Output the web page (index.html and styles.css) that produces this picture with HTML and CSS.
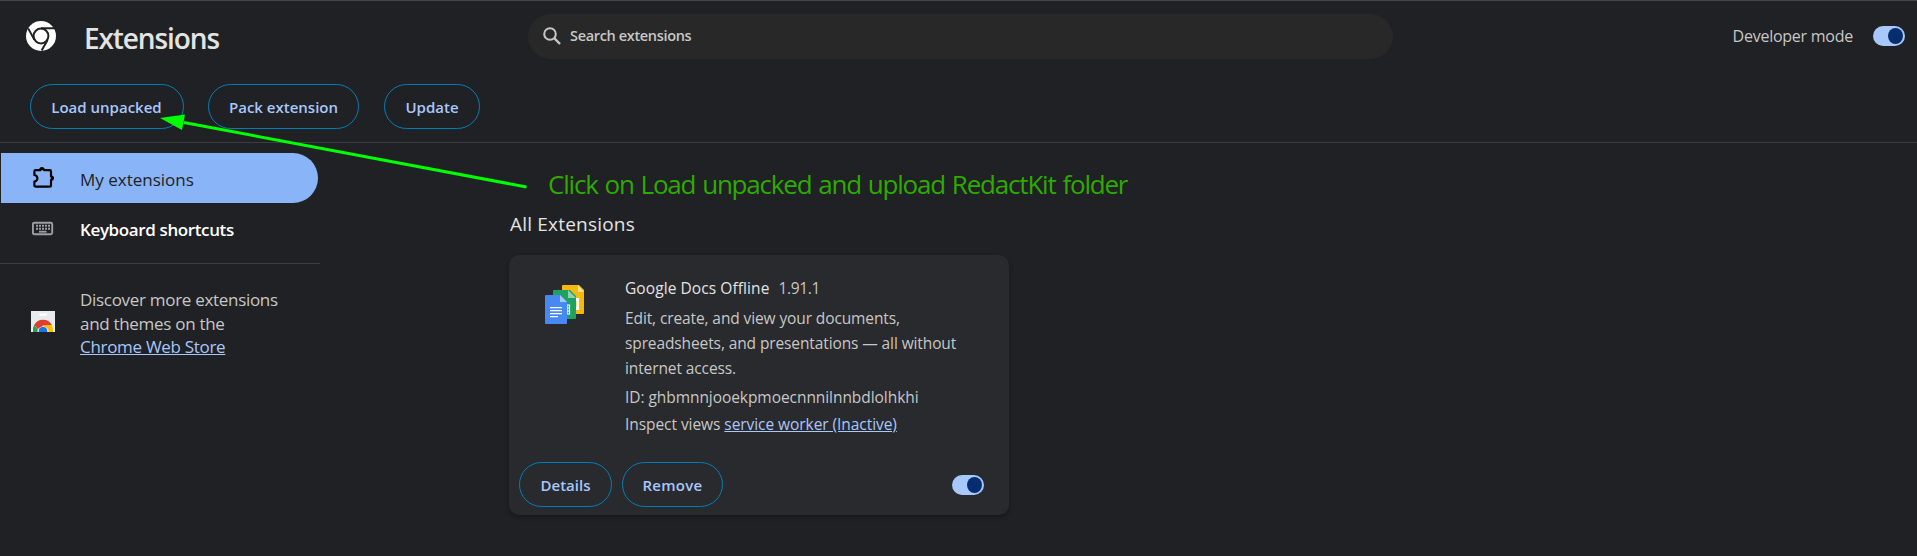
FILE: index.html
```
<!DOCTYPE html>
<html lang="en">
<head>
<meta charset="utf-8">
<title>Extensions</title>
<link rel="stylesheet" href="styles.css">
</head>
<body>
<header class="header">
  <div class="toolbar">
    <svg class="logo" viewBox="0 0 30 30">
      <circle cx="15" cy="15" r="15" fill="#fff"/>
      <circle cx="15" cy="15" r="7.4" fill="none" stroke="#202124" stroke-width="2"/>
      <path d="M15 7.3H28.5M8.4 18.9 2.2 7.4M21.6 18.9 15.6 29.5" fill="none" stroke="#202124" stroke-width="2"/>
    </svg>
    <h1 class="title">Extensions</h1>
    <div class="search">
      <svg class="search-icon" viewBox="0 0 18 18"><circle cx="7" cy="7" r="5.8" fill="none" stroke="#c7c7c7" stroke-width="2"/><path d="M11.2 11.2 17 17" stroke="#c7c7c7" stroke-width="2.4"/></svg>
      <span class="placeholder">Search extensions</span>
    </div>
    <div class="devmode"><span>Developer mode</span><i class="toggle"></i></div>
  </div>
  <div class="actions">
    <button class="btn btn-load">Load unpacked</button>
    <button class="btn btn-pack">Pack extension</button>
    <button class="btn btn-update">Update</button>
  </div>
</header>
<div class="page">
  <nav class="sidebar">
    <a class="nav-item active">
      <svg class="nav-icon" viewBox="0 0 22 22"><path d="M3 3.200H7.600A2.200 2.200 0 0 1 11.600 3.200H17.200Q18.400 3.200 18.400 4.400V9.200A2.200 2.200 0 0 1 18.400 13V18.400Q18.400 19.600 17.200 19.600H3Q1.800 19.600 1.800 18.400V14.600Q4.800 13.900 4.800 11.300T1.800 8V4.400Q1.800 3.200 3 3.200Z" transform="translate(.6 0)" fill="none" stroke="#000" stroke-width="2.200" stroke-linejoin="round"/><path d="M7.200 2.700A2.700 2.700 0 0 1 12.600 2.700ZM19.400 8.400A2.700 2.700 0 0 1 19.400 13.800Z"/></svg>
      <span class="nav-label">My extensions</span>
    </a>
    <a class="nav-item shortcuts">
      <svg class="nav-icon" viewBox="0 0 22 22"><rect x=".9" y="5.700" width="19.300" height="11.600" rx="1.500" fill="none" stroke="#9aa0a6" stroke-width="1.900"/><path d="M4 8.800H18M4 11.800H18" stroke="#9aa0a6" stroke-width="2" stroke-dasharray="2 1"/><path d="M7 14.700H14.500" stroke="#9aa0a6" stroke-width="1.800"/></svg>
      <span class="nav-label">Keyboard shortcuts</span>
    </a>
    <div class="promo">
      <svg class="store-icon" viewBox="0 0 24 21"><path fill="#e8eaed" d="M0 0H24V21H0z"/><rect x="8" y="2.500" width="8" height="2.200" rx="1.100" fill="#fff"/><path d="M3.200 13.800A10 10 0 0 1 20.800 14L12 14.600 7.500 19Z" fill="#e33b2e"/><path d="M3.200 13.800Q1.800 16 2 21H9L7 19Z" fill="#2a9e4c"/><path d="M12 14H20.800Q22.200 16.500 22 21H15Z" fill="#fbbc04"/><path d="M6.400 21A5.600 5.600 0 0 1 17.600 21Z" fill="#fff"/><path d="M7.700 21A4.400 4.400 0 1 1 16.300 21Z" fill="#1a73e8"/></svg>
      <p class="promo-text">Discover more extensions<br>and themes on the<br><a class="link">Chrome Web Store</a></p>
    </div>
  </nav>
  <main class="content">
    <p class="note">Click on Load unpacked and upload RedactKit folder</p>
    <h2 class="section">All Extensions</h2>
    <article class="card">
      <div class="card-main">
        <svg class="docs-icon" viewBox="0 0 39 39">
          <path d="M18 0H34L39 5V28Q39 29 38 29H18Q17 29 17 28V1Q17 0 18 0Z" fill="#f5b912"/><path d="M33 0 39 7H33Z" fill="#fbe08d"/><path d="M27 13H34V25H27Z" fill="#fff"/><path d="M27 16H31.500V22H27Z" fill="#f5b912"/>
          <path d="M9 5H25L31 11V33Q31 34 30 34H9Q8 34 8 33V6Q8 5 9 5Z" fill="#1fa162"/><path d="M23 5 31 13H23Z" fill="#8ed0b0"/><path d="M17 20H24.500V29H17M17 23H24.500M17 26H24.500M22 20V29" fill="none" stroke="#fff" stroke-width="1.200"/>
          <path d="M1 10H15L22 17V38Q22 39 21 39H1Q0 39 0 38V11Q0 10 1 10Z" fill="#4688f4"/><path d="M15 10 22 17H15Z" fill="#a8c7fa"/><path d="M5 22.700H17M5 25.700H17M5 28.700H17M5 31.700H13" stroke="#fff" stroke-width="1.300"/>
        </svg>
        <div class="info">
          <div class="name-row"><span class="name">Google Docs Offline</span><span class="version">1.91.1</span></div>
          <p class="desc">Edit, create, and view your documents,<br>spreadsheets, and presentations — all without<br>internet access.</p>
          <p class="meta">ID: ghbmnnjooekpmoecnnnilnnbdlolhkhi</p>
          <p class="meta views">Inspect views <a class="link">service worker (Inactive)</a></p>
        </div>
      </div>
      <div class="card-actions">
        <button class="btn btn-details">Details</button>
        <button class="btn btn-remove">Remove</button>
        <i class="toggle"></i>
      </div>
    </article>
  </main>
</div>
<svg class="arrow" viewBox="0 0 380 90"><path d="M34 9.500 376.500 74" stroke="#0f0" stroke-width="3"/><path d="M10 5 35 1.500 32 17Z" fill="#0f0"/></svg>
</body>
</html>
```
FILE: styles.css
```
* { box-sizing: border-box; }
body {
  margin: 0;
  height: 556px;
  overflow: hidden;
  background: #202124;
  color: #c7c7c7;
  font: 16px/24px "Open Sans", "Noto Sans", sans-serif;
  white-space: nowrap;
}
h1, h2, p { margin: 0; font-weight: 400; }
svg { display: block; flex: none; }
.header { height: 143px; border-top: 1px solid #474747; border-bottom: 1px solid #3c3d40; }
.toolbar { display: flex; align-items: center; height: 71px; padding: 0 12px 1px 26px; }
.logo { width: 30px; height: 30px; }
.title { width: 446px; margin-left: 26px; padding: 3px 0 0 2px; font-size: 28px; font-weight: 600; line-height: 36px; letter-spacing: -1.1px; color: #e3e3e3; }
.search { display: flex; align-items: center; gap: 9px; width: 865px; height: 45px; padding-left: 15px; border-radius: 23px; background: #282828; }
.placeholder { padding-bottom: 1px; font-size: 14.5px; font-weight: 600; letter-spacing: -.34px; }
.search-icon { width: 18px; height: 18px; }
.devmode { display: flex; align-items: center; gap: 20px; margin-left: auto; letter-spacing: -.25px; }
.toggle { display: flex; justify-content: flex-end; align-items: center; width: 32px; height: 20px; padding-right: 2px; border-radius: 10px; background: #a8c7fa; }
.toggle::after { content: ""; width: 15px; height: 16px; border-radius: 50%; background: #062e6f; }
.actions { display: flex; padding: 12px 30px 0; }
.btn { height: 45px; padding: 0 1px 0 0; border: 1px solid #047db7; border-radius: 23px; background: transparent; color: #a8c7fa; font: 600 15px/24px "Open Sans", sans-serif; white-space: nowrap; }
.btn-load { width: 154px; margin-right: 24px; }
.btn-pack { width: 151px; margin-right: 25px; padding: 0; }
.btn-update { width: 96px; padding: 0; }
.page { display: flex; }
.sidebar { width: 320px; padding-top: 10px; font-size: 17px; }
.nav-item { display: flex; align-items: center; gap: 26px; width: 317px; height: 50px; margin-left: 1px; padding-left: 31px; }
.nav-icon { width: 22px; height: 22px; }
.nav-label { padding-top: 4px; }
.active { border-radius: 0 25px 25px 0; background: #8ab4f8; color: #202124; }
.shortcuts { color: #fff; font-weight: 600; letter-spacing: -.38px; }
.promo { display: flex; align-items: flex-start; gap: 25px; margin-top: 10px; padding: 24px 0 0 31px; border-top: 1px solid #3c3d40; }
.promo-text { line-height: 23.7px; letter-spacing: -.3px; }
.store-icon { width: 24px; height: 21px; margin-top: 23px; }
.link { color: #a8c7fa; text-decoration: underline; }
.content { padding: 23px 0 0 189px; }
.note { padding-left: 39px; color: #2eaa00; font-size: 26px; line-height: 36px; letter-spacing: -1.2px; word-spacing: 1.3px; }
.section { margin-top: 10px; padding-left: 1px; font-size: 19px; line-height: 24px; letter-spacing: .2px; color: #e3e3e3; }
.card { display: flex; flex-direction: column; justify-content: space-between; width: 500px; height: 260px; margin-top: 19px; padding: 20px 25px 8px 10px; border-radius: 10px; background: #292a2d; box-shadow: 0 2px 4px rgba(0,0,0,.3); }
.card-main { display: flex; gap: 41px; padding-left: 26px; font-size: 15.5px; letter-spacing: -.11px; }
.docs-icon { width: 39px; height: 39px; margin-top: 10px; }
.name-row { display: flex; gap: 9px; height: 31px; padding-top: 1px; }
.name { color: #e3e3e3; letter-spacing: .08px; }
.version { letter-spacing: -.35px; }
.desc { line-height: 25px; }
.meta { padding-top: 4px; letter-spacing: -.06px; }
.views { padding-top: 3px; }
.card-actions { display: flex; align-items: center; gap: 10px; }
.btn-details { width: 93px; padding: 0; }
.btn-remove { width: 101px; padding: 0; letter-spacing: .3px; }
.card-actions .toggle { margin-left: auto; }
.arrow { position: absolute; left: 150px; top: 113px; width: 380px; height: 90px; }
```
